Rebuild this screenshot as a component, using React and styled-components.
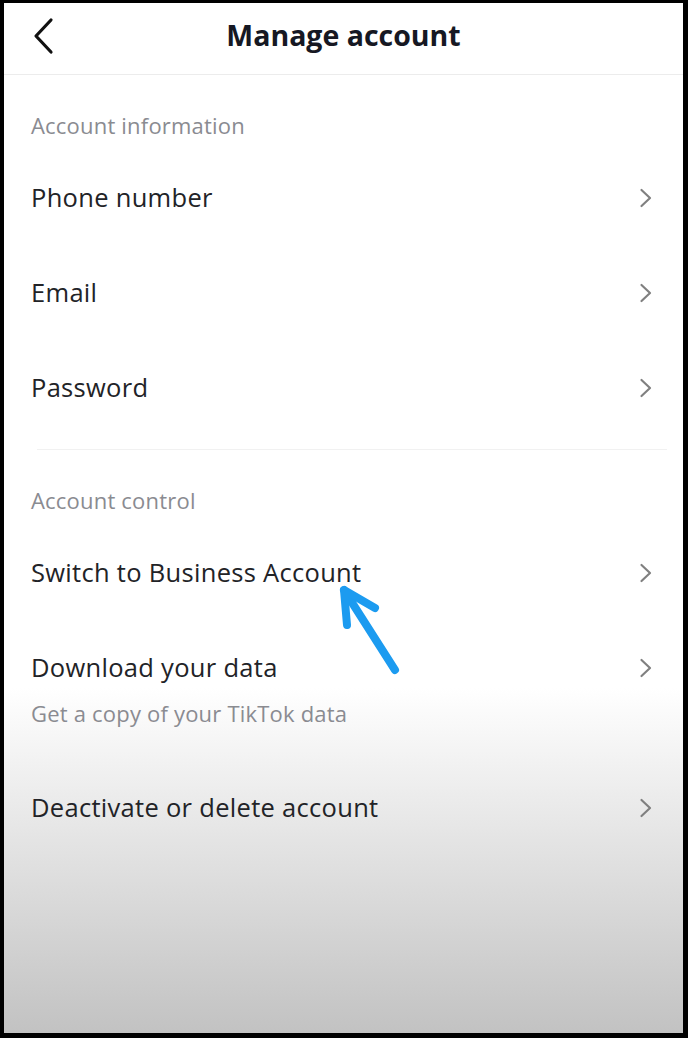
import React from 'react'
import styled, { createGlobalStyle } from 'styled-components'

const GlobalStyle = createGlobalStyle`
  html, body {
    margin: 0;
    padding: 0;
    background: #000;
  }
  body {
    font-family: "Open Sans", Lato, sans-serif;
  }
`

const sections = [
  {
    title: 'Account information',
    items: [
      { label: 'Phone number' },
      { label: 'Email' },
      { label: 'Password' },
    ],
  },
  {
    title: 'Account control',
    items: [
      { label: 'Switch to Business Account' },
      { label: 'Download your data', hint: 'Get a copy of your TikTok data' },
      { label: 'Deactivate or delete account' },
    ],
  },
]

const BackIcon = () => (
  <svg width="22" height="38" viewBox="0 0 22 38" fill="none">
    <path d="M19 3 L4 19 L19 35" stroke="#111" strokeWidth="3.2" strokeLinecap="round" strokeLinejoin="round" />
  </svg>
)

const Chevron = () => (
  <svg width="14" height="20" viewBox="0 0 14 20" fill="none">
    <path d="M2.5 2 L11 10 L2.5 18" stroke="#808080" strokeWidth="2.2" strokeLinecap="round" strokeLinejoin="round" />
  </svg>
)

const Pointer = () => (
  <ArrowMark width="80" height="104" viewBox="0 0 80 104" fill="none">
    <path d="M63 92 L12 12" stroke="#1c9bf0" strokeWidth="8" strokeLinecap="round" />
    <path d="M15 47 L12 12 L43 30" stroke="#1c9bf0" strokeWidth="8" strokeLinecap="round" strokeLinejoin="round" />
  </ArrowMark>
)

const App = () => {
  return (
    <Frame>
      <GlobalStyle />
      <Screen>
        <Header>
          <BackButton><BackIcon /></BackButton>
          <Title>Manage account</Title>
          <span />
        </Header>
        {sections.map((section, i) => (
          <Section key={section.title}>
            {i > 0 ? <Divider /> : null}
            <SectionLabel>{section.title}</SectionLabel>
            {section.items.map(item => (
              <Row key={item.label}>
                <RowText>
                  <RowLabel>{item.label}</RowLabel>
                  {item.hint ? <RowHint>{item.hint}</RowHint> : null}
                </RowText>
                <ChevronWrap><Chevron /></ChevronWrap>
              </Row>
            ))}
          </Section>
        ))}
        <Pointer />
      </Screen>
    </Frame>
  )
}

export default App

const Frame = styled.div`
  height: 100vh;
  box-sizing: border-box;
  padding: 3px 5px 5px 4px;
  display: flex;
`
const Screen = styled.div`
  position: relative;
  flex: 1;
  display: flex;
  flex-direction: column;
  overflow: hidden;
  background: linear-gradient(180deg, #ffffff 0%, #ffffff 66.5%, #c2c2c2 100%);
`
const Header = styled.div`
  height: 72px;
  box-sizing: border-box;
  padding-bottom: 7px;
  flex-shrink: 0;
  display: grid;
  grid-template-columns: 90px 1fr 90px;
  align-items: center;
  border-bottom: 1px solid #ececec;
`
const BackButton = styled.div`
  display: flex;
  align-items: center;
  padding-left: 28px;
  padding-top: 2px;
`
const Title = styled.div`
  text-align: center;
  font-size: 28.5px;
  font-weight: 700;
  color: #161823;
`
const Section = styled.div`
  display: flex;
  flex-direction: column;
`
const Divider = styled.div`
  height: 1px;
  margin: 14px 16px 0 33px;
  background: #f1f1f1;
`
const SectionLabel = styled.div`
  height: 75px;
  box-sizing: border-box;
  display: flex;
  align-items: flex-end;
  padding: 0 0 12px 27px;
  font-size: 22px;
  line-height: 26px;
  letter-spacing: 0.2px;
  color: #8a8b91;
`
const Row = styled.div`
  display: flex;
  align-items: flex-start;
  justify-content: space-between;
  padding: 35px 30px 35px 27px;
`
const RowText = styled.div`
  display: flex;
  flex-direction: column;
  gap: 21px;
`
const RowLabel = styled.div`
  font-size: 25.5px;
  line-height: 25px;
  letter-spacing: 0.3px;
  color: #222327;
`
const RowHint = styled.div`
  font-size: 22px;
  line-height: 24px;
  letter-spacing: 0.2px;
  color: #8a8b91;
`
const ChevronWrap = styled.div`
  display: flex;
  align-items: center;
  height: 25px;
`
const ArrowMark = styled.svg`
  position: absolute;
  left: 328px;
  top: 575px;
`
